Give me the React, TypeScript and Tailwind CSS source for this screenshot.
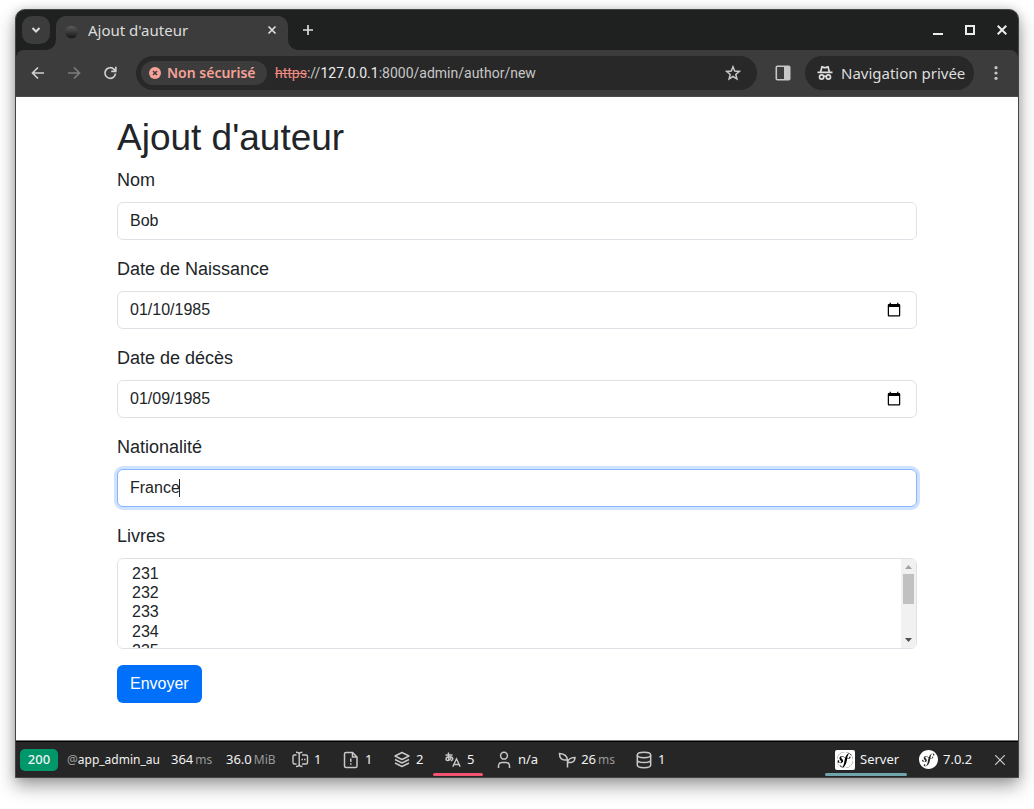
import type { ReactNode } from "react";
import { SiSymfony } from "react-icons/si";

function Stroke({ size, width = 2, children }: { size: number; width?: number; children: ReactNode }) {
  return (
    <svg
      width={size}
      height={size}
      viewBox={`0 0 ${size} ${size}`}
      fill="none"
      stroke="currentColor"
      strokeWidth={width}
      aria-hidden="true"
      className="shrink-0"
    >
      {children}
    </svg>
  );
}

function TabStrip() {
  return (
    <div className="flex h-10 items-start pt-1.5 pl-1.5 pr-[11px] text-[#dcdcdc]">
      <button aria-label="Rechercher des onglets" className="flex size-7 items-center justify-center rounded-[10px] bg-[#3c3c3c]">
        <Stroke size={10}>
          <path d="M1.500 3l3.500 3.500L8.500 3" />
        </Stroke>
      </button>
      <div className="relative ml-1.5 flex h-[34px] w-[232px] items-center rounded-t-[10px] bg-[#3c3c3c] pb-1.5 pl-2 pr-2.5">
        <svg width="10" height="10" className="absolute bottom-0 -left-2.5 text-[#3c3c3c]" aria-hidden="true">
          <path d="M10 0v10H0A10 10 0 0 0 10 0z" fill="currentColor" />
        </svg>
        <svg width="10" height="10" className="absolute bottom-0 -right-2.5 text-[#3c3c3c]" aria-hidden="true">
          <path d="M0 0v10h10A10 10 0 0 1 0 0z" fill="currentColor" />
        </svg>
        <svg width="16" height="16" viewBox="0 0 16 16" className="mt-1" aria-hidden="true">
          <defs>
            <linearGradient id="orb" x1="0" y1="0" x2="0" y2="1">
              <stop offset="0" stopColor="#5c5c5c" />
              <stop offset="1" stopColor="#161616" />
            </linearGradient>
          </defs>
          <circle cx="7.500" cy="8" r="6.300" fill="url(#orb)" />
        </svg>
        <span className="ml-2 flex-1 truncate text-[15px] leading-5">Ajout d'auteur</span>
        <button aria-label="Fermer l'onglet" className="mr-px">
          <Stroke size={10} width={1.7}>
            <path d="M1.500 1.500l7 7M8.500 1.500l-7 7" />
          </Stroke>
        </button>
      </div>
      <button aria-label="Nouvel onglet" className="ml-3.5 flex h-7 w-3 items-center">
        <Stroke size={12} width={1.7}>
          <path d="M6 1v10M1 6h10" />
        </Stroke>
      </button>
      <div className="ml-auto flex h-7 items-center gap-[22px] text-[#ececec]">
        <button aria-label="Réduire">
          <Stroke size={10}>
            <path d="M0 9h10" />
          </Stroke>
        </button>
        <button aria-label="Agrandir">
          <Stroke size={10}>
            <path d="M1 1h8v8H1z" />
          </Stroke>
        </button>
        <button aria-label="Fermer">
          <Stroke size={10}>
            <path d="M.7.7l8.600 8.600M9.300.7L.7 9.300" />
          </Stroke>
        </button>
      </div>
    </div>
  );
}

function Toolbar() {
  return (
    <div className="flex h-[47px] items-center rounded-t-lg border-b border-[#4a4a4a] bg-[#3c3c3c] pl-[14px] pr-[14px] text-[#c7c7c7]">
      <button aria-label="Retour" className="text-[#d0d0d0]">
        <Stroke size={16} width={1.7}>
          <path d="M14 8H3M8 2.500L2.500 8 8 13.500" />
        </Stroke>
      </button>
      <button aria-label="Avancer" className="ml-5 text-[#7c7c7c]">
        <Stroke size={16} width={1.700}>
          <path d="M2 8h11M8 2.500L13.500 8 8 13.500" />
        </Stroke>
      </button>
      <button aria-label="Actualiser" className="ml-5 text-[#d0d0d0]">
        <Stroke size={16} width={1.700}>
          <path d="M13.500 8.500A5.300 5.300 0 1 1 12 4.300l1.700 1.900M13.800 1.800v4.600H9.200" />
        </Stroke>
      </button>
      <div className="ml-[18px] flex h-[34px] flex-1 items-center rounded-full bg-[#282828] pl-[5px] pr-4">
        <button className="flex h-6 w-[126px] items-center gap-1.5 rounded-full bg-[#3c3c3c] pl-2 text-sm font-semibold text-[#f6a298]">
          <svg width="12" height="12" viewBox="0 0 12 12" className="shrink-0" aria-hidden="true">
            <circle cx="6" cy="6" r="6" fill="currentColor" />
            <path d="M4 4l4 4M8 4L4 8" stroke="#3c3c3c" strokeWidth="1.500" />
          </svg>
          <span className="whitespace-nowrap">Non sécurisé</span>
        </button>
        <span className="ml-2 flex-1 truncate font-[Roboto,sans-serif] text-sm text-[#c7c7c7]">
          <span className="text-[#f28b82] line-through">https</span>
          ://<span className="text-[#ececec]">127.0.0.1</span>:8000/admin/author/new
        </span>
        <button aria-label="Ajouter aux favoris">
          <Stroke size={16} width={1.500}>
            <path d="M8 1.800l1.700 4.300 4.600.3-3.500 3 1.100 4.500L8 11.500l-3.900 2.400 1.100-4.500-3.500-3 4.600-.3z" />
          </Stroke>
        </button>
      </div>
      <button aria-label="Panneau latéral" className="ml-[18px]">
        <Stroke size={16} width={1.600}>
          <rect x="1.300" y="1.300" width="13.400" height="13.400" rx="1" />
          <path d="M9 1h5.500v14H9z" fill="currentColor" stroke="none" />
        </Stroke>
      </button>
      <button className="ml-[14px] flex h-[34px] w-[169px] items-center gap-2 rounded-full bg-[#282828] pl-3 text-[15px] text-[#dedede]">
        <Stroke size={16} width={1.700}>
          <path d="M.5 7.300h15" />
          <path d="M3.600 7L5 1.800l1.700.6c.8.3 1.800.3 2.600 0L11 1.800 12.400 7" />
          <circle cx="4.600" cy="12" r="2.100" />
          <circle cx="11.400" cy="12" r="2.100" />
          <path d="M6.500 11.600c.9-.5 2.100-.5 3 0" />
        </Stroke>
        <span className="whitespace-nowrap">Navigation privée</span>
      </button>
      <button aria-label="Menu" className="ml-[14px]">
        <svg width="16" height="16" viewBox="0 0 16 16" fill="currentColor" aria-hidden="true">
          <circle cx="8" cy="2.700" r="1.600" />
          <circle cx="8" cy="8" r="1.600" />
          <circle cx="8" cy="13.300" r="1.600" />
        </svg>
      </button>
    </div>
  );
}

const label = "mb-2 block text-lg leading-[27px]";
const control =
  "block h-[38px] w-full rounded-md border border-[#dee2e6] bg-white px-3 text-base leading-6 outline-none [&::-webkit-datetime-edit-month-field]:p-0 [&::-webkit-datetime-edit-day-field]:p-0 [&::-webkit-datetime-edit-year-field]:p-0";

const books = Array.from({ length: 10 }, (_, i) => 231 + i);

function AuthorForm() {
  return (
    <main className="bg-white px-[101px] pt-[18px] pb-[37px] font-['Liberation_Sans',Arial,sans-serif] text-[#212529]">
      <h1 className="mb-1.5 text-[37px] leading-[46px]">Ajout d'auteur</h1>
      <form className="flex flex-col gap-4" onSubmit={(e) => e.preventDefault()}>
        <div>
          <label htmlFor="nom" className={label}>Nom</label>
          <input id="nom" type="text" defaultValue="Bob" className={control} />
        </div>
        <div>
          <label htmlFor="naissance" className={label}>Date de Naissance</label>
          <input id="naissance" type="date" defaultValue="1985-01-10" className={control} />
        </div>
        <div>
          <label htmlFor="deces" className={label}>Date de décès</label>
          <input id="deces" type="date" defaultValue="1985-01-09" className={control} />
        </div>
        <div>
          <label htmlFor="nationalite" className={label}>Nationalité</label>
          <div className="relative">
            <input
              id="nationalite"
              type="text"
              defaultValue="France"
              className="block h-[38px] w-full rounded-md border border-[#86b7fe] bg-white px-3 text-base leading-6 shadow-[0_0_0_3px_#cfe2ff] outline-none"
            />
            <span className="absolute top-2.5 left-[62px] h-[18px] w-px bg-[#212529]" />
          </div>
        </div>
        <div>
          <label htmlFor="livres" className={label}>Livres</label>
          <div className="relative">
            <select
              id="livres"
              multiple
              className="block h-[91px] w-full rounded-md border border-[#dee2e6] bg-white px-3 py-1.5 text-base outline-none [scrollbar-width:none]"
            >
              {books.map((n) => (
                <option key={n} value={n} className="px-0.5">{n}</option>
              ))}
            </select>
            <div className="absolute top-px right-px bottom-px flex w-[15px] flex-col items-center rounded-r-[5px] bg-[#f1f1f1]">
              <svg width="7" height="4" className="mt-1.5 text-[#a3a3a3]" aria-hidden="true">
                <path d="M0 4L3.500 0 7 4z" fill="currentColor" />
              </svg>
              <div className="mt-[5px] h-[30px] w-[11px] bg-[#c1c1c1]" />
              <svg width="7" height="4" className="mt-auto mb-1.5 text-[#505050]" aria-hidden="true">
                <path d="M0 0h7L3.500 4z" fill="currentColor" />
              </svg>
            </div>
          </div>
        </div>
        <button type="submit" className="h-[38px] self-start rounded-md bg-[#0070fb] px-[13px] text-base text-white">
          Envoyer
        </button>
      </form>
    </main>
  );
}

function Item({ icon, unit, children, mark }: { icon: ReactNode; unit?: string; children: ReactNode; mark?: boolean }) {
  return (
    <a href="#" className="relative mr-px flex h-full min-w-[50px] items-center gap-1 pr-2 pl-2.5">
      <span className="flex w-5 justify-center text-[#c8c8c8]">{icon}</span>
      <span className="flex items-baseline gap-0.5 text-[#f2f2f2]">
        <span>{children}</span>
        {unit && <span className="text-xs text-[#999]">{unit}</span>}
      </span>
      {mark && <span className="absolute inset-x-0 bottom-px h-[3px] rounded-xs bg-[#f2536f]" />}
    </a>
  );
}

function DebugBar() {
  return (
    <footer className="flex h-[37px] items-center border-t border-[#777] bg-[#262626] pt-px pl-1 text-[13px] text-[#f2f2f2] shadow-[inset_0_1px_0_#000]">
      <a href="#" className="flex h-[22px] w-[38px] items-center justify-center rounded-[5px] bg-[#00976b] font-medium">
        200
      </a>
      <a href="#" className="ml-[9px] w-[94px] text-xs whitespace-nowrap">
        <span className="text-[#a0a0a0]">@</span>app_admin_au
      </a>
      <a href="#" className="ml-2.5 flex w-[55px] items-baseline gap-0.5">
        <span>364</span>
        <span className="text-xs text-[#999]">ms</span>
      </a>
      <a href="#" className="flex w-[54px] items-baseline gap-0.5">
        <span>36.0</span>
        <span className="text-xs text-[#999]">MiB</span>
      </a>
      <Item
        icon={
          <Stroke size={18} width={1.400}>
            <path d="M5.500 4H3.500Q2 4 2 5.500v6Q2 13 3.500 13H5.500M11 4h4q1.500 0 1.500 1.500v6q0 1.500-1.500 1.500h-4" />
            <path d="M5 1.200q3.200 0 3.200 2v10.300q0 2-3.200 2M11.400 1.200q-3.200 0-3.200 2v10.300q0 2 3.200 2" />
            <path d="M10.500 8.500h1.500M13 8.500h1.500" />
          </Stroke>
        }
      >
        1
      </Item>
      <Item
        icon={
          <Stroke size={18} width={1.500}>
            <path d="M4 1.500h6.500l4.500 4.500v9q0 1.500-1.500 1.500H4Q2.500 16.500 2.500 15V3Q2.500 1.500 4 1.500z" />
            <path d="M10.500 1.500V6H15" />
            <path d="M8.800 7.500v3.500M8.800 12.300v1.500" />
          </Stroke>
        }
      >
        1
      </Item>
      <Item
        icon={
          <Stroke size={18} width={1.400}>
            <path d="M9 1.500l7 3.500-7 3.500L2 5z" strokeLinejoin="round" />
            <path d="M2 8.500l7 3.500 7-3.500M2 12l7 3.500 7-3.500" strokeLinejoin="round" />
          </Stroke>
        }
      >
        2
      </Item>
      <Item
        mark
        icon={
          <Stroke size={18} width={1.400}>
            <path d="M1.500 4h7M4.500 1.500v5.500q0 1.500 1 2.500M7.500 5.500q-1 3.500-3.500 4-2 0-2-1.500 0-2 3.500-2.200 3.500 0 3.300 2 0 1.500-2 2" />
            <path d="M8.800 15.800L12.500 7.800l3.700 8M10 13.500h5" />
          </Stroke>
        }
      >
        5
      </Item>
      <Item
        icon={
          <Stroke size={18} width={1.500}>
            <circle cx="9" cy="4.700" r="3.400" />
            <path d="M3.500 17v-2q0-3.500 3.500-3.500h4q3.500 0 3.500 3.500v2" />
          </Stroke>
        }
      >
        n/a
      </Item>
      <Item
        unit="ms"
        icon={
          <Stroke size={18} width={1.500}>
            <path d="M9.500 16.500V12q0-2.500 2-4 2-1.500 5.500-1.500-.3 5-4.500 5H9.500M9.500 11.500V9Q9 3 1.500 2.500 1.500 9 7 9h2.500" />
          </Stroke>
        }
      >
        26
      </Item>
      <Item
        icon={
          <Stroke size={18} width={1.500}>
            <ellipse cx="9" cy="4" rx="6.700" ry="2.700" />
            <path d="M2.300 4v10q0 2.700 6.700 2.700t6.700-2.700V4M2.300 9q0 2.500 6.700 2.500T15.700 9" />
          </Stroke>
        }
      >
        1
      </Item>
      <a href="#" className="relative ml-auto flex h-full w-[82px] items-center gap-[5px] pl-2.5">
        <span className="flex size-5 shrink-0 items-center justify-center rounded-xs bg-white">
          <span className="flex size-4 items-center justify-center overflow-hidden rounded-full bg-black">
            <SiSymfony size={22} className="shrink-0 text-white" />
          </span>
        </span>
        <span>Server</span>
        <span className="absolute inset-x-0 bottom-px h-[3px] rounded-xs bg-[#70a5ab]" />
      </a>
      <a href="#" className="ml-3 flex w-[68px] items-center gap-[5px]">
        <SiSymfony size={19} className="shrink-0 text-white" />
        <span>7.0.2</span>
      </a>
      <button aria-label="Fermer la barre" className="mr-[13px] ml-2 text-[#c8c8c8]">
        <Stroke size={10} width={1.200}>
          <path d="M0 0l10 10M10 0L0 10" />
        </Stroke>
      </button>
    </footer>
  );
}

export default function App() {
  return (
    <div className="min-h-screen bg-white px-[15px] pt-[9px] pb-8 font-['Noto_Sans',sans-serif]">
      <div className="overflow-hidden rounded-t-[10px] border border-[#454545] bg-[#1f2120] shadow-[0_8px_18px_rgba(0,0,0,0.38),0_0_8px_rgba(0,0,0,0.15)]">
        <TabStrip />
        <Toolbar />
        <AuthorForm />
        <DebugBar />
      </div>
    </div>
  );
}
